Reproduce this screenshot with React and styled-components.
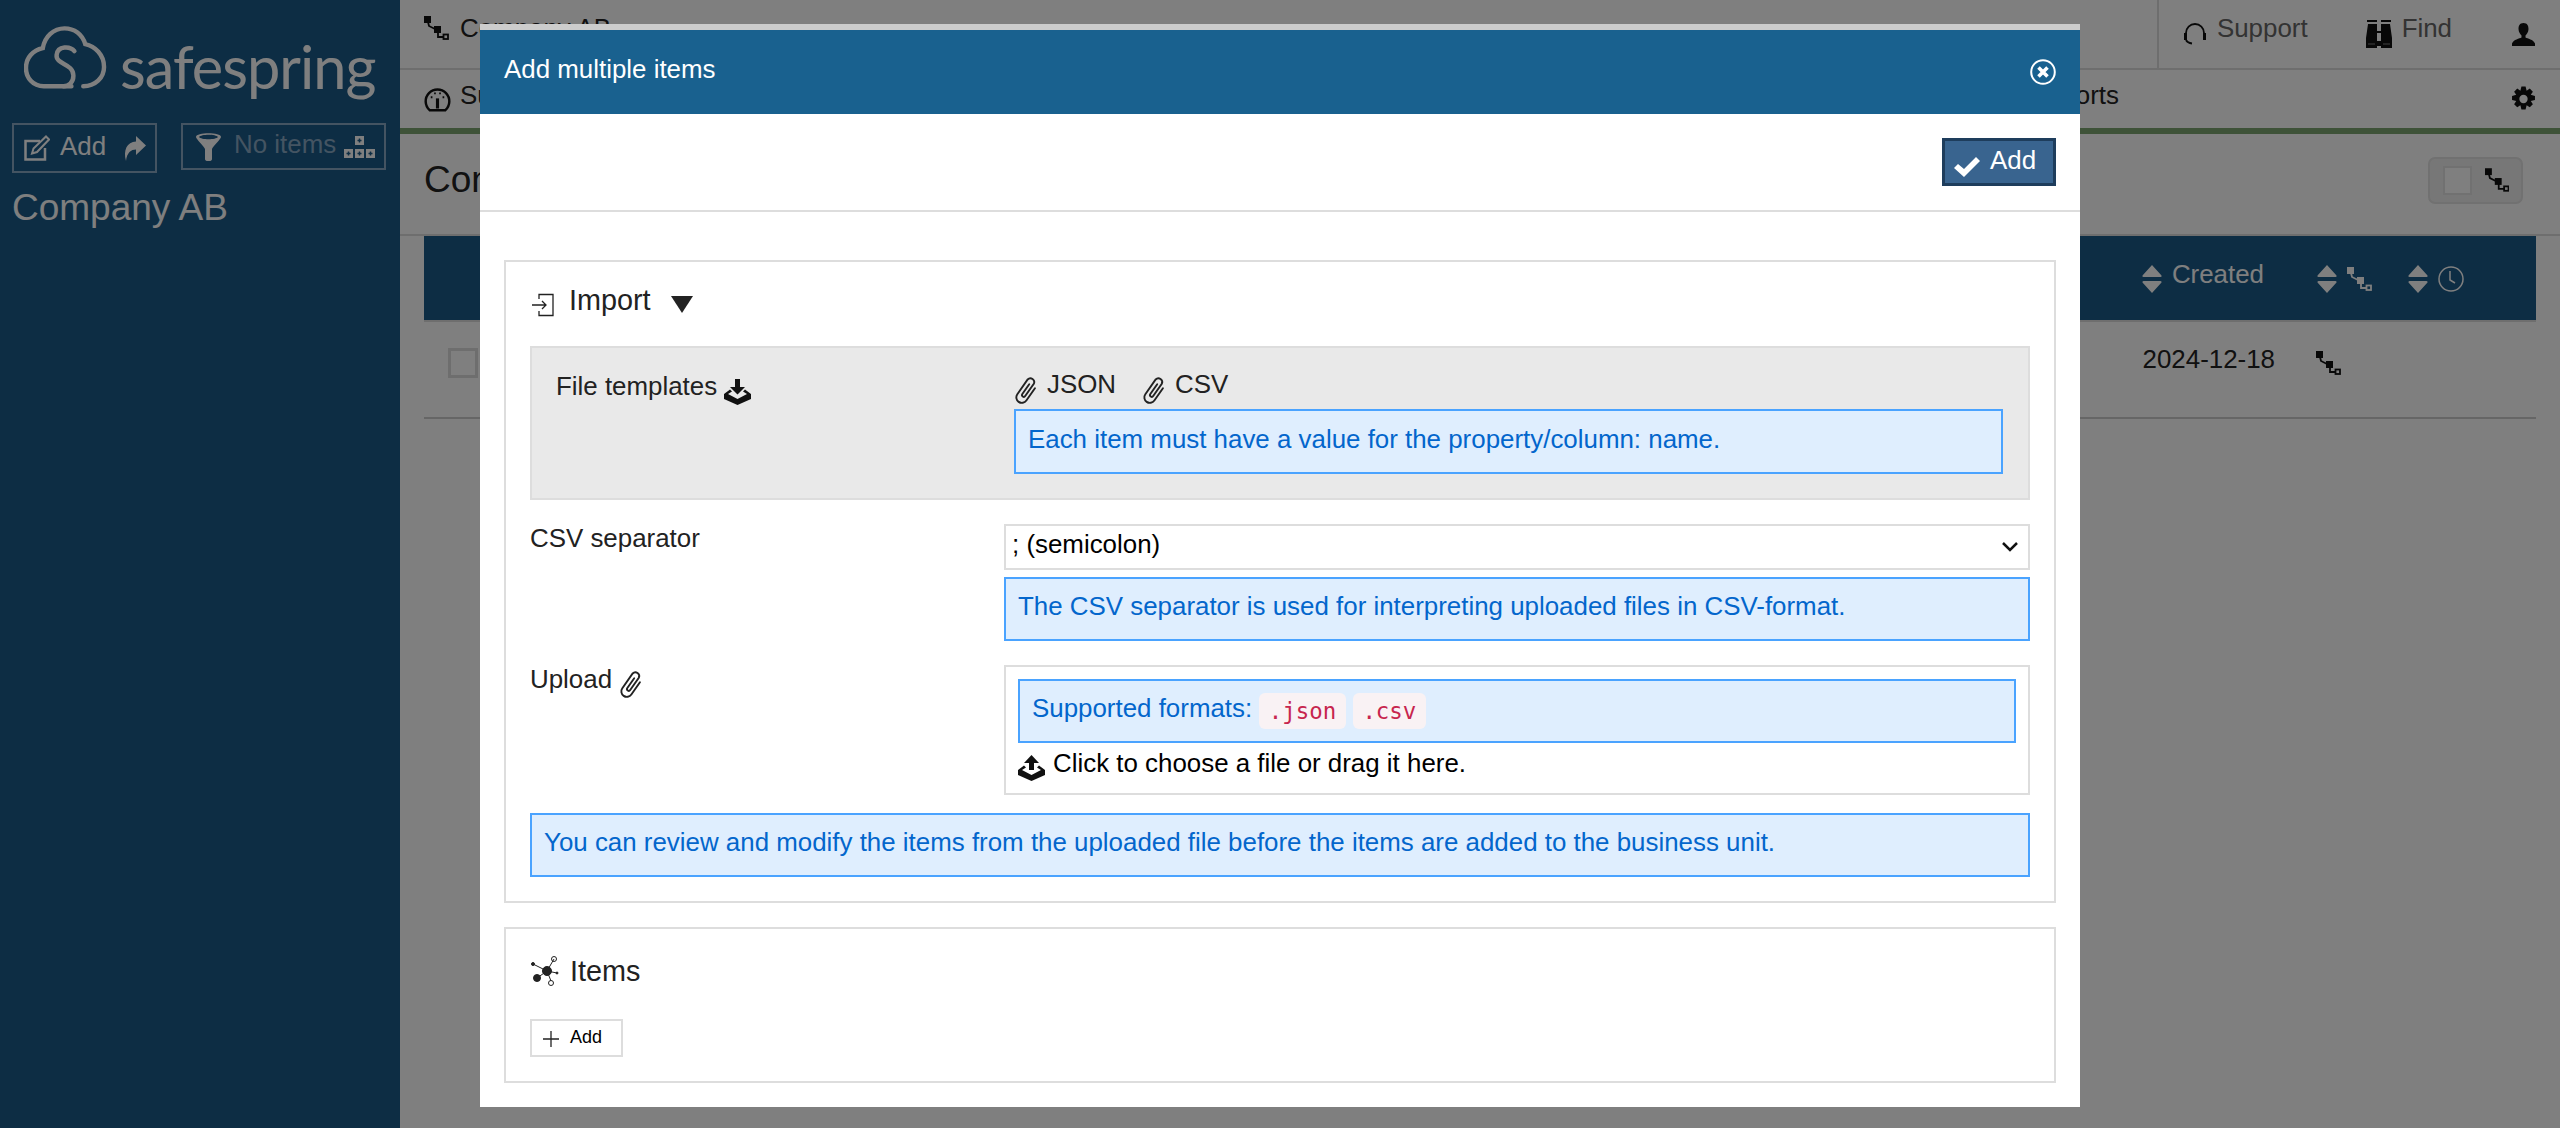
import React from 'react'
import styled, { createGlobalStyle } from 'styled-components'

const Global = createGlobalStyle`
  html, body { margin: 0; padding: 0; height: 100%; background: #fff; overflow: hidden; }
  body { font-family: "Liberation Sans", Arial, sans-serif; color: #222; font-size: 25.900px; }
  * { box-sizing: border-box; }
`

/* icons */
const Tree = ({ color = '#111' }) => (
  <svg width="25" height="24" viewBox="0 0 25 24" fill={color}>
    <rect x="0" y="0" width="7" height="7" />
    <rect x="10" y="10" width="7" height="7" />
    <rect x="19.500" y="18.500" width="4.500" height="4.500" fill="none" stroke={color} strokeWidth="1.800" />
    <path d="M4 6l1 4 6 3M14 16v5h6" fill="none" stroke={color} strokeWidth="1.800" />
  </svg>
)
const Gauge = () => (
  <svg width="27" height="27" viewBox="0 0 24 24" fill="none" stroke="#111" strokeWidth="2.200">
    <path d="M5 21.500a10.500 10.500 0 1 1 14 0z" />
    <path d="M12 11v9" strokeWidth="2.800" />
    <path d="M6 10h1.500M9 6.500h1.500M13.500 6.500H15M16.500 10H18" strokeWidth="1.600" />
  </svg>
)
const Clip = () => (
  <svg width="26" height="26" viewBox="0 0 26 26" fill="none" stroke="#222" strokeWidth="1.900" strokeLinecap="round" style={{ overflow: 'visible' }}>
    <path transform="translate(13 13) rotate(35)" d="M5.500-6V9A5.500 5.500 0 0 1-5.500 9V-9A3.800 3.800 0 0 1 2-9V6A1.600 1.600 0 0 1-1.500 6V-6" />
  </svg>
)
const Tray = ({ up, color = '#111' }) => (
  <svg width="27" height="26" viewBox="0 0 27 26" fill={color}>
    {up
      ? <path d="M13.500 0L21 8h-5v7h-5V8H6z" />
      : <path d="M11 0h5v8h5l-7.500 7.500L6 8h5z" />}
    <path d="M6 10.500L0 15v5l13.500 6L27 20v-5l-6-4.500-2 2 4 2.500-9.500 5-9.500-5 4-2.500z" />
  </svg>
)
const SortIcon = ({ className }) => (
  <svg className={className} width="20" height="28" viewBox="0 0 20 28" fill="#fff">
    <path d="M10 0l9.500 10.500q.5 1.500-1 1.500h-17q-1.500 0-1-1.500zM10 28L.5 17.500q-.5-1.500 1-1.500h17q1.500 0 1 1.500z" />
  </svg>
)

const Shell = styled.div`
  display: grid;
  grid-template-columns: 400px 1fr;
  height: 1128px;
  background: #fff;
`
const Side = styled.aside`
  background: #1a5a88;
  padding: 18px 12px;
  color: #fff;
`
const Logo = styled.div`
  display: flex;
  align-items: center;
  gap: 13px;
  padding-left: 12px;
  height: 84px;
  font-family: Lato, "Liberation Sans", sans-serif;
  font-size: 59.500px;
  letter-spacing: -1px;
  color: #fff;
`
const LogoCloud = styled.svg`
  margin-top: -6px;
`
const LogoWord = styled.span`
  padding-top: 12px;
`
const SideButtons = styled.div`
  display: flex;
  gap: 24px;
  align-items: flex-start;
  margin-top: 21px;
`
const SideBtn = styled.div`
  display: flex;
  align-items: center;
  border: 2px solid #88a9c4;
  width: ${p => p.$w}px;
  height: ${p => p.$h}px;
  padding: 0 0 0 ${p => p.$pad}px;
  white-space: nowrap;
  color: ${p => p.$muted ? '#88a9c4' : '#fff'};
`
const BtnText = styled.span`
  margin: 0 ${p => p.$right}px 0 ${p => p.$left}px;
  padding-bottom: ${p => p.$up || 0}px;
`
const SideTitle = styled.div`
  font-size: 37px;
  margin-top: 14px;
  color: #fff;
`
const Main = styled.main`
  display: flex;
  flex-direction: column;
  min-width: 0;
`
const TopBar = styled.div`
  height: 70px;
  display: flex;
  align-items: center;
  justify-content: space-between;
  border-bottom: 2px solid #ddd;
  padding-left: 24px;
`
const Crumb = styled.div`
  display: flex;
  align-items: center;
  gap: 11px;
  padding-bottom: 12px;
  color: #222;
`
const TopRight = styled.div`
  display: flex;
  align-items: center;
  height: 100%;
  border-left: 2px solid #ddd;
  padding: 0 25px 0 25px;
  color: #666;
`
const TopLink = styled.span`
  display: inline-flex;
  align-items: center;
  gap: ${p => p.$gap}px;
  margin-right: ${p => p.$right}px;
`
const TopText = styled.span`
  padding-bottom: 12px;
`
const Tabs = styled.div`
  height: 58px;
  display: flex;
  align-items: center;
  padding: 0 24px;
`
const TabLabel = styled.span`
  display: inline-flex;
  align-items: center;
  gap: 9px;
  margin-left: ${p => p.$auto ? 'auto' : '0'};
  margin-right: ${p => p.$right || 0}px;
`
const TabText = styled.span`
  padding-bottom: 7px;
`
const GreenBar = styled.div`
  height: 6px;
  background: #7ca470;
`
const TitleRow = styled.div`
  height: 102px;
  display: flex;
  align-items: center;
  justify-content: space-between;
  padding: 0 37px 8px 24px;
  border-bottom: 2px solid #ddd;
`
const PageTitle = styled.h1`
  margin: 0;
  font-weight: 400;
  font-size: 37px;
  color: #222;
`
const Toggle = styled.div`
  width: 95px;
  height: 47px;
  border: 2px solid #e2e2e2;
  border-radius: 7px;
  background: #eee;
  display: flex;
  align-items: center;
  padding: 0 12px 0 13px;
  gap: 13px;
`
const ToggleBox = styled.div`
  width: 29px;
  height: 29px;
  background: #fff;
  border: 2px solid #e2e2e2;
`
const Table = styled.div`
  margin: 0 24px;
`
const THead = styled.div`
  height: 86px;
  background: linear-gradient(#1a5a88 84px, #ddd 0);
  display: flex;
  align-items: center;
  justify-content: flex-end;
  color: #fff;
  padding-right: 72px;
`
const HeadCell = styled.span`
  display: inline-flex;
  align-items: center;
  gap: 10px;
  margin-left: ${p => p.$left || 0}px;
`
const HeadText = styled.span`
  padding-bottom: 10px;
`
const TRow = styled.div`
  height: 97px;
  border-bottom: 2px solid #ccc;
  display: flex;
  align-items: center;
  padding: 0 195px 14px 24px;
`
const Check = styled.div`
  width: 30px;
  height: 30px;
  border: 3px solid #ddd;
`
const RowDate = styled.div`
  margin-left: auto;
  display: flex;
  align-items: center;
  gap: 41px;
  color: #222;
`
const RowDateText = styled.span`
  padding-bottom: 6px;
`

/* overlay and dialog */
const Backdrop = styled.div`
  position: fixed;
  inset: 0;
  background: rgba(0, 0, 0, 0.5);
`
const Dialog = styled.div`
  position: fixed;
  left: 480px;
  top: 24px;
  width: 1600px;
  height: 1083px;
  background: #fff;
  border-top: 6px solid #ccc;
`
const DialogHead = styled.div`
  height: 84px;
  background: #19618f;
  color: #fff;
  display: flex;
  align-items: center;
  justify-content: space-between;
  padding: 0 24px;
`
const DialogTitle = styled.span`
  padding-bottom: 6px;
`
const DialogTools = styled.div`
  height: 98px;
  display: flex;
  align-items: center;
  justify-content: flex-end;
  padding: 0 24px;
  border-bottom: 2px solid #ddd;
`
const PrimaryBtn = styled.button`
  height: 48px;
  width: 114px;
  background: #39648f;
  border: 3px solid #1e3d5c;
  color: #fff;
  font: 25.900px "Liberation Sans", sans-serif;
  display: flex;
  align-items: center;
  gap: 10px;
  padding: 0 9px;
`
const DialogBody = styled.div`
  padding: 48px 24px 0;
  display: flex;
  flex-direction: column;
  gap: 24px;
`
const Panel = styled.section`
  border: 2px solid #ddd;
  padding: 0 24px;
`
const PanelHead = styled.h3`
  margin: 0;
  height: 84px;
  display: flex;
  align-items: center;
  gap: 10px;
  padding-bottom: ${p => p.$up || 0}px;
  font-weight: 400;
  font-size: 28.800px;
  color: #222;
`
const ImportIcon = styled.svg`
  margin: 10px 5px 0 2px;
`
const Caret = styled.i`
  width: 0;
  height: 0;
  border-left: 11px solid transparent;
  border-right: 11px solid transparent;
  border-top: 17px solid #222;
  margin: 8px 0 0 10px;
`
const Templates = styled.div`
  display: grid;
  grid-template-columns: 458px 1fr;
  height: 154px;
  background: #e9e9e9;
  border: 2px solid #ddd;
  padding: 22px 25px 0 24px;
`
const Label = styled.div`
  display: flex;
  align-items: flex-start;
  gap: 7px;
  margin-top: ${p => p.$top || 0}px;
  color: #222;
`
const IconNudge = styled.span`
  display: inline-flex;
  margin-top: ${p => p.$top}px;
`
const FileLinks = styled.div`
  display: flex;
  gap: 26px;
  height: 39px;
`
const FileLink = styled.span`
  display: inline-flex;
  gap: 7px;
  align-items: flex-start;
`
const Alert = styled.div`
  background: #dfeefe;
  border: 2px solid #4aa3ff;
  color: #0366cc;
  height: ${p => p.$h || 64}px;
  padding: 0 12px 5px;
  display: flex;
  align-items: center;
  gap: 7px;
`
const FormRow = styled.div`
  display: grid;
  grid-template-columns: 474px 1fr;
  margin-top: 24px;
`
const SelectBox = styled.div`
  height: 46px;
  border: 2px solid #ddd;
  display: flex;
  align-items: center;
  justify-content: space-between;
  padding: 0 10px 5px 6px;
  color: #000;
  margin-bottom: 7px;
`
const Chevron = styled.svg`
  margin-top: 5px;
`
const UploadBox = styled.div`
  height: 130px;
  border: 2px solid #ddd;
  padding: 12px 12px 0;
`
const DropLine = styled.div`
  display: flex;
  align-items: flex-start;
  gap: 8px;
  color: #000;
  margin-top: 6px;
`
const Code = styled.code`
  font-family: "DejaVu Sans Mono", monospace;
  font-size: 22.400px;
  color: #c7254e;
  background: #f9f2f4;
  border-radius: 6px;
  height: 36px;
  line-height: 36px;
  padding: 0 9.600px;
  margin-top: 5px;
`
const Note = styled(Alert)`
  margin: 18px 0 24px;
`
const SmallBtn = styled.button`
  width: 93px;
  height: 38px;
  border: 2px solid #ddd;
  background: #fff;
  font: 18px "Liberation Sans", sans-serif;
  color: #000;
  display: flex;
  align-items: center;
  gap: 11px;
  padding: 0 0 2px 11px;
  margin: 6px 0 24px;
`

const App = () => (
  <>
    <Global />
    <Shell>
      <Side>
        <Logo>
          <LogoCloud width="83" height="63" viewBox="0 0 84 63" fill="none" stroke="#fff" strokeWidth="4.500" strokeLinecap="round">
            <path d="M48 60.500H20C9 60.500 2 52 2 42C2 32 9 24 19 22C21 10 30 2 41 2C51 2 59 8 62 18C72 20 81 29 81 41C81 52 72 60.500 60 60.500" />
            <path d="M51 25C47 20 34 19 33 29C32 39 50 37 50 50C50 57 45 60.500 40 60.500" />
          </LogoCloud>
          <LogoWord>safespring</LogoWord>
        </Logo>
        <SideButtons>
          <SideBtn $w={145} $h={50} $pad={10}>
            <svg width="26" height="26" viewBox="0 0 26 26" fill="none" stroke="#fff" strokeWidth="2.500">
              <path d="M16 6H1.500v18.500H21V13" />
              <path d="M22 1.500l3 3L13 17l-5 1.500L9.500 13.500z" strokeWidth="2" />
            </svg>
            <BtnText $left={10} $right={17} $up={3}>Add</BtnText>
            <svg width="23" height="25" viewBox="0 0 23 25" fill="#fff"><path d="M13 0l10 9.500L13 19v-5.500c-5 0-9 3-10 11.500C0 14 4 6 13 5.500z" /></svg>
          </SideBtn>
          <SideBtn $w={205} $h={47} $pad={12} $muted>
            <svg width="27" height="28" viewBox="0 0 27 28" fill="#fff">
              <path d="M1 4c0-5 25-5 25 0 0 2-8 9-9 12v10c0 3-7 3-7 0V16C9 13 1 6 1 4zM4 4c2 3 17 3 19 0-2-3-17-3-19 0z" fillRule="evenodd" />
            </svg>
            <BtnText $left={12} $right={8} $up={5}>No items</BtnText>
            <svg width="31" height="22" viewBox="0 0 31 22">
              <rect x="11" y="0" width="9" height="9" fill="#fff" />
              <rect x="0" y="13" width="9" height="9" fill="#fff" />
              <rect x="11" y="13" width="9" height="9" fill="#fff" />
              <rect x="22" y="13" width="9" height="9" fill="#fff" />
              <path d="M15.500 2.500v4M13.500 4.500h4M4.500 15.500v4M2.500 17.500h4M15.500 15.500v4M13.500 17.500h4M26.500 15.500v4M24.500 17.500h4" stroke="#1a5a88" strokeWidth="1.500" />
            </svg>
          </SideBtn>
        </SideButtons>
        <SideTitle>Company AB</SideTitle>
      </Side>
      <Main>
        <TopBar>
          <Crumb><Tree />Company AB</Crumb>
          <TopRight>
            <TopLink $gap={11} $right={58}>
              <svg width="22" height="22" viewBox="0 0 22 22" fill="none" stroke="#111" strokeWidth="1.800">
                <path d="M2 12V10a9 9 0 0 1 18 0v2" />
                <rect x="0" y="10" width="3" height="7" fill="#111" stroke="none" />
                <rect x="19" y="10" width="3" height="7" fill="#111" stroke="none" />
                <path d="M2 17c1 2 3 3 6 3.500" />
              </svg>
              <TopText>Support</TopText>
            </TopLink>
            <TopLink $gap={10} $right={60}>
              <svg width="26" height="28" viewBox="0 0 26 28" fill="#111">
                <path d="M1 0h10v2H1zM15 0h10v2H15zM2 4h9v7h4V4h9l2 14v10H15v-2h-4v2H0V18zM11 13v8h4v-8z" fillRule="evenodd" />
                <path d="M2 24h7M17 24h7" stroke="#808080" strokeWidth="1" />
              </svg>
              <TopText>Find</TopText>
            </TopLink>
            <svg width="23" height="23" viewBox="0 0 23 23" fill="#111"><path d="M11.500 0c4 0 5 3 5 6 0 3-2 5.500-3 6.500v2c2 1 8 2 9.500 6v2.500H0V20.500c1.500-4 7.500-5 9.500-6v-2C8.500 11.500 6.500 9 6.500 6c0-3 1-6 5-6z" /></svg>
          </TopRight>
        </TopBar>
        <Tabs>
          <TabLabel><Gauge /><TabText>Summary</TabText></TabLabel>
          <TabLabel $auto $right={392}><TabText>Reports</TabText></TabLabel>
          <svg width="25" height="26" viewBox="0 0 24 24" fill="#111"><path fillRule="evenodd" d="M10 0h4l1 4 3-2 3 3-2 3 4 1v4l-4 1 2 3-3 3-3-2-1 4h-4l-1-4-3 2-3-3 2-3-4-1V9l4-1-2-3 3-3 3 2zM12 8a4 4 0 1 0 0 8 4 4 0 0 0 0-8z" /></svg>
        </Tabs>
        <GreenBar />
        <TitleRow>
          <PageTitle>Company AB</PageTitle>
          <Toggle><ToggleBox /><Tree /></Toggle>
        </TitleRow>
        <Table>
          <THead>
            <HeadCell><SortIcon /><HeadText>Created</HeadText></HeadCell>
            <HeadCell $left={53}><SortIcon /><Tree color="#fff" /></HeadCell>
            <HeadCell $left={36}>
              <SortIcon />
              <svg width="26" height="26" viewBox="0 0 26 26" fill="none" stroke="#fff" strokeWidth="1.500"><circle cx="13" cy="13" r="12" /><path d="M12 5v9l5 3" /></svg>
            </HeadCell>
          </THead>
          <TRow>
            <Check />
            <RowDate><RowDateText>2024-12-18</RowDateText><Tree /></RowDate>
          </TRow>
        </Table>
      </Main>
    </Shell>

    <Backdrop />
    <Dialog>
      <DialogHead>
        <DialogTitle>Add multiple items</DialogTitle>
        <svg width="26" height="26" viewBox="0 0 26 26" fill="none" stroke="#fff"><circle cx="13" cy="13" r="11.800" strokeWidth="2" /><path d="M8.500 8.500l9 9M17.500 8.500l-9 9" strokeWidth="3.600" /></svg>
      </DialogHead>
      <DialogTools>
        <PrimaryBtn>
          <svg width="26" height="21" viewBox="0 0 26 21" fill="#fff" style={{ marginTop: 8 }}><path d="M0 12l4-4 6 5L22 1l4 4-16 16z" /></svg>
          <BtnText $left={0} $right={0} $up={4}>Add</BtnText>
        </PrimaryBtn>
      </DialogTools>
      <DialogBody>
        <Panel>
          <PanelHead $up={8}>
            <ImportIcon width="22" height="24" viewBox="0 0 22 24" fill="none" stroke="#222" strokeWidth="1.300">
              <path d="M7 6V1.500h14v21H7V18" />
              <path d="M0 12h14M10 8l4 4-4 4" />
            </ImportIcon>
            Import
            <Caret />
          </PanelHead>
          <Templates>
            <Label $top={2}>File templates <IconNudge $top={7}><Tray /></IconNudge></Label>
            <div>
              <FileLinks>
                <FileLink><IconNudge $top={7}><Clip /></IconNudge>JSON</FileLink>
                <FileLink><IconNudge $top={7}><Clip /></IconNudge>CSV</FileLink>
              </FileLinks>
              <Alert $h={65}>Each item must have a value for the property/column: name.</Alert>
            </div>
          </Templates>
          <FormRow>
            <Label>CSV separator</Label>
            <div>
              <SelectBox>
                ; (semicolon)
                <Chevron width="16" height="10" viewBox="0 0 16 10" fill="none" stroke="#111" strokeWidth="2.500"><path d="M1 1l7 7 7-7" /></Chevron>
              </SelectBox>
              <Alert>The CSV separator is used for interpreting uploaded files in CSV-format.</Alert>
            </div>
          </FormRow>
          <FormRow>
            <Label>Upload <IconNudge $top={6}><Clip /></IconNudge></Label>
            <UploadBox>
              <Alert>Supported formats: <Code>.json</Code><Code>.csv</Code></Alert>
              <DropLine><IconNudge $top={6}><Tray up /></IconNudge>Click to choose a file or drag it here.</DropLine>
            </UploadBox>
          </FormRow>
          <Note>You can review and modify the items from the uploaded file before the items are added to the business unit.</Note>
        </Panel>
        <Panel>
          <PanelHead>
            <svg width="30" height="32" viewBox="0 0 30 32" fill="#222" stroke="#222"><circle cx="17" cy="16" r="4.500" /><circle cx="7" cy="23" r="3.500" /><circle cx="3" cy="9" r="1.500" /><circle cx="27" cy="18" r="1" /><circle cx="24" cy="4" r="2.500" fill="#fff" strokeWidth="1" /><circle cx="21" cy="28" r="2.500" fill="#fff" strokeWidth="1" /><path d="M3 9l14 7 10 2M7 23l10-7 7-12M17 16l4 10" strokeWidth="1" fill="none" /></svg>
            Items
          </PanelHead>
          <SmallBtn>
            <svg width="16" height="16" viewBox="0 0 16 16" stroke="#222" strokeWidth="1.300" style={{ marginTop: 4 }}><path d="M8 0v16M0 8h16" /></svg>
            Add
          </SmallBtn>
        </Panel>
      </DialogBody>
    </Dialog>
  </>
)

export default App
